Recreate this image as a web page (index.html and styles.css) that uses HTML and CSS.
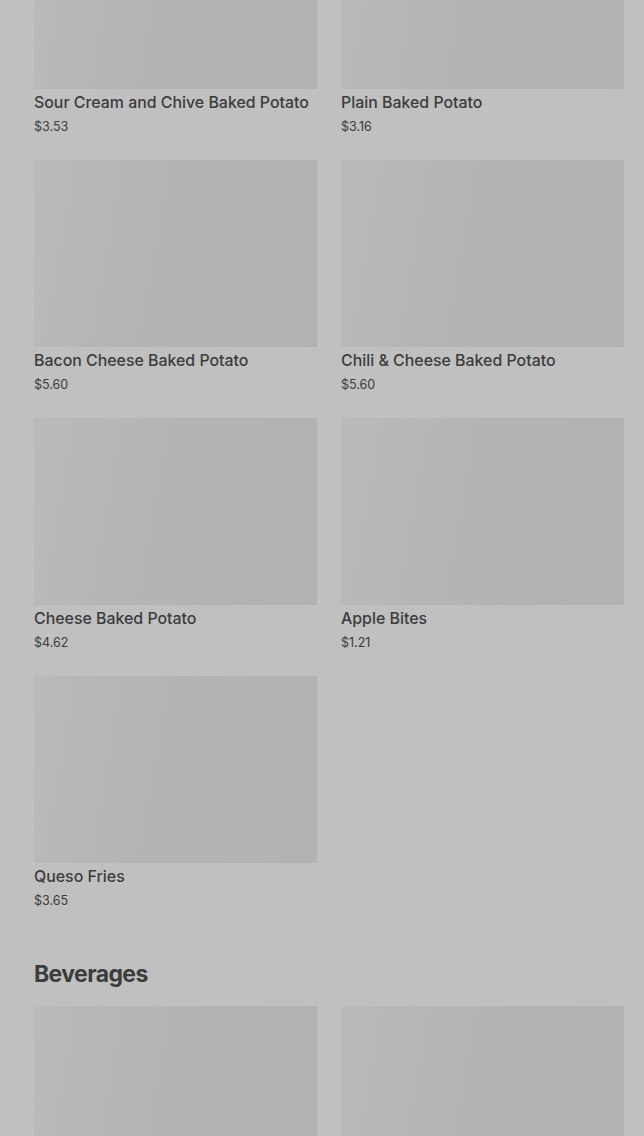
FILE: index.html
```html
<!DOCTYPE html>
<html lang="en">
<head>
    <meta charset="UTF-8">
    <meta name="viewport" content="width=device-width, initial-scale=1.0">
    <title>Menu</title>
    <link rel="stylesheet" href="styles.css">
</head>
<body>
    <main class="menu">
        <section class="menu-section">
            <div class="item-grid">
                <div class="item-card">
                    <div class="item-image"></div>
                    <h3 class="item-name">Sour Cream and Chive Baked Potato</h3>
                    <p class="item-price">$3.53</p>
                </div>
                <div class="item-card">
                    <div class="item-image"></div>
                    <h3 class="item-name">Plain Baked Potato</h3>
                    <p class="item-price">$3.16</p>
                </div>
                <div class="item-card">
                    <div class="item-image"></div>
                    <h3 class="item-name">Bacon Cheese Baked Potato</h3>
                    <p class="item-price">$5.60</p>
                </div>
                <div class="item-card">
                    <div class="item-image"></div>
                    <h3 class="item-name">Chili &amp; Cheese Baked Potato</h3>
                    <p class="item-price">$5.60</p>
                </div>
                <div class="item-card">
                    <div class="item-image"></div>
                    <h3 class="item-name">Cheese Baked Potato</h3>
                    <p class="item-price">$4.62</p>
                </div>
                <div class="item-card">
                    <div class="item-image"></div>
                    <h3 class="item-name">Apple Bites</h3>
                    <p class="item-price">$1.21</p>
                </div>
                <div class="item-card">
                    <div class="item-image"></div>
                    <h3 class="item-name">Queso Fries</h3>
                    <p class="item-price">$3.65</p>
                </div>
            </div>
        </section>

        <section class="menu-section">
            <h2 class="section-title">Beverages</h2>
            <div class="item-grid">
                <div class="item-card">
                    <div class="item-image"></div>
                </div>
                <div class="item-card">
                    <div class="item-image"></div>
                </div>
            </div>
        </section>
    </main>
</body>
</html>
```

FILE: styles.css
```css
body {
    font-family: Inter, "Liberation Sans", sans-serif;
    margin: 0;
    padding: 0;
    background-color: #c0c0c0;
    color: #3c3c3c;
    overflow: hidden;
}
.menu {
    padding: 0 20px 0 34px;
    margin-top: -98px; /* page is scrolled down */
}
.item-grid {
    display: grid;
    grid-template-columns: 1fr 1fr;
    column-gap: 24px;
    row-gap: 25px;
}
.item-image {
    height: 187px;
    background: linear-gradient(100deg, #bababa 0%, #b4b4b4 45%, #b2b2b2 100%);
}
.item-name {
    font-size: 15.9px;
    font-weight: 500;
    line-height: 20px;
    margin: 4px 0 0;
    white-space: nowrap;
}
.item-price {
    font-size: 12.5px;
    line-height: 16px;
    margin: 6px 0 0;
}
.section-title {
    font-size: 23px;
    font-weight: 700;
    letter-spacing: -0.6px;
    line-height: 30px;
    margin: 50px 0 17px;
}
```
